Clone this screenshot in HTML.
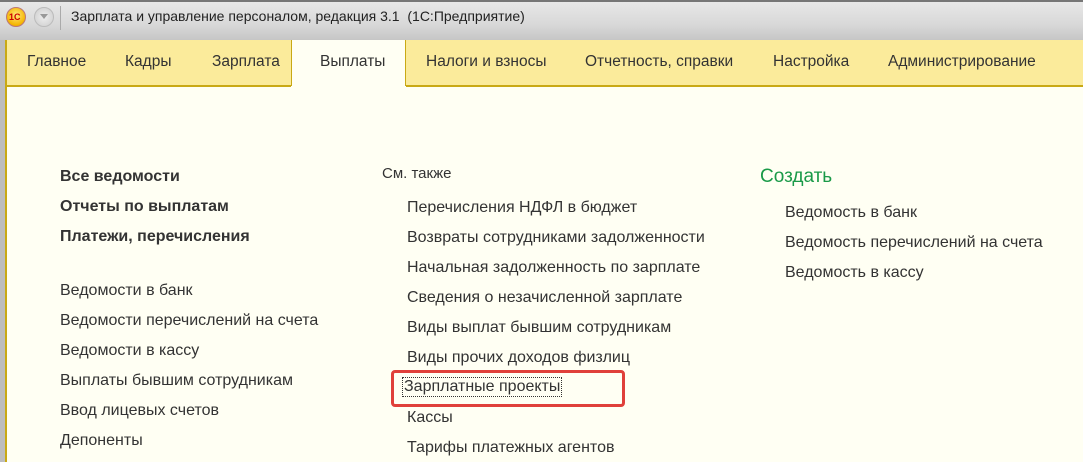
<!DOCTYPE html>
<html><head><meta charset="utf-8">
<style>
*{margin:0;padding:0;box-sizing:border-box}
body{width:1083px;height:462px;overflow:hidden;background:#fffff3;font-family:"Liberation Sans",Arial,sans-serif;color:#333;position:relative}
.t{position:absolute;font-size:16px;line-height:18px;white-space:nowrap}
.b{font-weight:bold}
#title{position:absolute;left:0;top:0;width:1083px;height:40px;background:linear-gradient(#e8e8e8,#d8d8d8 60%,#c6c6c6);border-top:2px solid #777}
#menu{position:absolute;left:0;top:40px;width:1083px;height:47px;background:#fbeb9b;border-bottom:2px solid #c9a915}
.m{position:absolute;top:13px;font-size:15.5px;color:#333;white-space:nowrap}
</style></head><body>
<div id="title">
 <div style="position:absolute;left:6px;top:5px;width:20px;height:20px;border-radius:50%;background:radial-gradient(circle at 50% 40%,#ffe97a,#f4b400 70%,#d28a00);border:1px solid #b77;"></div>
 <div style="position:absolute;left:9px;top:10px;font-size:9px;font-weight:bold;color:#c00">1С</div>
 <div style="position:absolute;left:34px;top:5px;width:20px;height:20px;border-radius:50%;background:radial-gradient(#eee,#ccc);border:1px solid #bbb"></div>
 <div style="position:absolute;left:40px;top:12px;width:0;height:0;border-left:4px solid transparent;border-right:4px solid transparent;border-top:5px solid #999"></div>
 <div style="position:absolute;left:60px;top:4px;width:1px;height:24px;background:#aaa"></div>
 <div style="position:absolute;left:71px;top:6px;font-size:14px;color:#222">Зарплата и управление персоналом, редакция 3.1&nbsp; (1С:Предприятие)</div>
</div>
<div style="position:absolute;left:0;top:40px;width:5px;height:422px;background:#bdbdbd"></div>
<div style="position:absolute;left:5px;top:40px;width:2px;height:422px;background:#c9a915"></div>
<div id="menu" style="left:7px;width:1076px">
 <div class="m" style="left:20px">Главное</div>
 <div class="m" style="left:118px">Кадры</div>
 <div class="m" style="left:205px">Зарплата</div>
 <div style="position:absolute;left:284px;top:0;width:115px;height:47px;background:#fffff3;border-left:1px solid #c9a915;border-right:1px solid #c9a915"></div>
 <div class="m" style="left:313px">Выплаты</div>
 <div class="m" style="left:419px">Налоги и взносы</div>
 <div class="m" style="left:578px">Отчетность, справки</div>
 <div class="m" style="left:766px">Настройка</div>
 <div class="m" style="left:881px">Администрирование</div>
</div>
<div style="position:absolute;left:291px;top:86px;width:115px;height:3px;background:#fffff3"></div>

<div class="t b" style="left:60px;top:168px">Все ведомости</div>
<div class="t b" style="left:60px;top:198px">Отчеты по выплатам</div>
<div class="t b" style="left:60px;top:228px">Платежи, перечисления</div>
<div class="t" style="left:60px;top:282px">Ведомости в банк</div>
<div class="t" style="left:60px;top:312px">Ведомости перечислений на счета</div>
<div class="t" style="left:60px;top:342px">Ведомости в кассу</div>
<div class="t" style="left:60px;top:372px">Выплаты бывшим сотрудникам</div>
<div class="t" style="left:60px;top:402px">Ввод лицевых счетов</div>
<div class="t" style="left:60px;top:432px">Депоненты</div>

<div class="t" style="left:382px;top:165px;font-size:15px">См. также</div>
<div class="t" style="left:407px;top:199px">Перечисления НДФЛ в бюджет</div>
<div class="t" style="left:407px;top:229px">Возвраты сотрудниками задолженности</div>
<div class="t" style="left:407px;top:259px">Начальная задолженность по зарплате</div>
<div class="t" style="left:407px;top:289px">Сведения о незачисленной зарплате</div>
<div class="t" style="left:407px;top:319px">Виды выплат бывшим сотрудникам</div>
<div class="t" style="left:407px;top:349px">Виды прочих доходов физлиц</div>
<div style="position:absolute;left:391px;top:370px;width:234px;height:37px;border:3px solid #e0403a;border-radius:4px"></div>
<div class="t" style="left:403px;top:378px;padding:0 1px;outline:1px dotted #333">Зарплатные проекты</div>
<div class="t" style="left:407px;top:409px">Кассы</div>
<div class="t" style="left:407px;top:439px">Тарифы платежных агентов</div>

<div class="t" style="left:760px;top:166px;font-size:19px;line-height:21px;color:#1a9a48">Создать</div>
<div class="t" style="left:785px;top:204px">Ведомость в банк</div>
<div class="t" style="left:785px;top:234px">Ведомость перечислений на счета</div>
<div class="t" style="left:785px;top:264px">Ведомость в кассу</div>
</body></html>
